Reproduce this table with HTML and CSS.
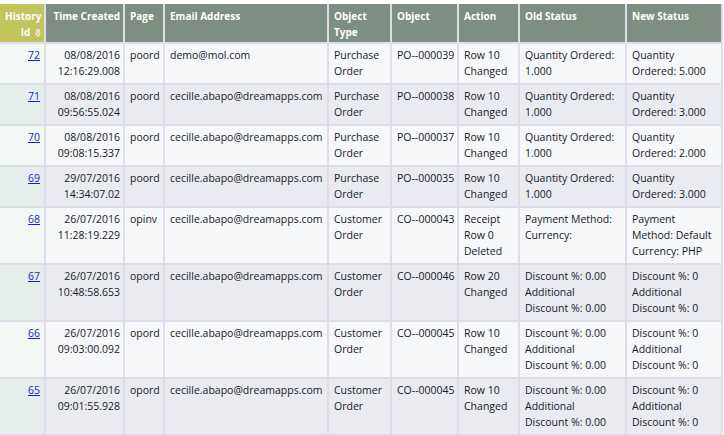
FILE: index.html
```html
<!DOCTYPE html>
<html>
<head>
<meta charset="utf-8">
<link rel="stylesheet" href="styles.css">
</head>
<body>
<table class="grid">
  <colgroup>
    <col class="c1"><col class="c2"><col class="c3"><col class="c4"><col class="c5"><col class="c6"><col class="c7"><col class="c8"><col class="c9">
  </colgroup>
  <thead>
    <tr>
      <th class="sorted num">History Id <svg class="sort" width="6" height="8" viewBox="0 0 6 8"><path d="M2 0V5M4 0V5M0.5 4.5L3 7.5L5.5 4.5" fill="none" stroke="#fff" stroke-width="1"/></svg></th>
      <th class="num">Time Created</th>
      <th>Page</th>
      <th>Email Address</th>
      <th>Object Type</th>
      <th>Object</th>
      <th>Action</th>
      <th>Old Status</th>
      <th>New Status</th>
    </tr>
  </thead>
  <tbody>
    <tr class="odd">
      <td class="id"><a href="#">72</a></td>
      <td class="num">08/08/2016 12:16:29.008</td>
      <td>poord</td>
      <td>demo@mol.com</td>
      <td>Purchase Order</td>
      <td class="code">PO--000039</td>
      <td>Row 10 Changed</td>
      <td>Quantity Ordered: 1.000</td>
      <td>Quantity Ordered: 5.000</td>
    </tr>
    <tr class="even">
      <td class="id"><a href="#">71</a></td>
      <td class="num">08/08/2016 09:56:55.024</td>
      <td>poord</td>
      <td>cecille.abapo@dreamapps.com</td>
      <td>Purchase Order</td>
      <td class="code">PO--000038</td>
      <td>Row 10 Changed</td>
      <td>Quantity Ordered: 1.000</td>
      <td>Quantity Ordered: 3.000</td>
    </tr>
    <tr class="odd">
      <td class="id"><a href="#">70</a></td>
      <td class="num">08/08/2016 09:08:15.337</td>
      <td>poord</td>
      <td>cecille.abapo@dreamapps.com</td>
      <td>Purchase Order</td>
      <td class="code">PO--000037</td>
      <td>Row 10 Changed</td>
      <td>Quantity Ordered: 1.000</td>
      <td>Quantity Ordered: 2.000</td>
    </tr>
    <tr class="even">
      <td class="id"><a href="#">69</a></td>
      <td class="num">29/07/2016 14:34:07.02</td>
      <td>poord</td>
      <td>cecille.abapo@dreamapps.com</td>
      <td>Purchase Order</td>
      <td class="code">PO--000035</td>
      <td>Row 10 Changed</td>
      <td>Quantity Ordered: 1.000</td>
      <td>Quantity Ordered: 3.000</td>
    </tr>
    <tr class="odd">
      <td class="id"><a href="#">68</a></td>
      <td class="num">26/07/2016 11:28:19.229</td>
      <td>opinv</td>
      <td>cecille.abapo@dreamapps.com</td>
      <td>Customer Order</td>
      <td class="code">CO--000043</td>
      <td>Receipt Row 0 Deleted</td>
      <td>Payment Method:<br>Currency:</td>
      <td>Payment Method: Default<br>Currency: PHP</td>
    </tr>
    <tr class="even">
      <td class="id"><a href="#">67</a></td>
      <td class="num">26/07/2016 10:48:58.653</td>
      <td>opord</td>
      <td>cecille.abapo@dreamapps.com</td>
      <td>Customer Order</td>
      <td class="code">CO--000046</td>
      <td>Row 20 Changed</td>
      <td>Discount %: 0.00<br>Additional<br>Discount %: 0.00</td>
      <td>Discount %: 0<br>Additional<br>Discount %: 0</td>
    </tr>
    <tr class="odd">
      <td class="id"><a href="#">66</a></td>
      <td class="num">26/07/2016 09:03:00.092</td>
      <td>opord</td>
      <td>cecille.abapo@dreamapps.com</td>
      <td>Customer Order</td>
      <td class="code">CO--000045</td>
      <td>Row 10 Changed</td>
      <td>Discount %: 0.00<br>Additional<br>Discount %: 0.00</td>
      <td>Discount %: 0<br>Additional<br>Discount %: 0</td>
    </tr>
    <tr class="even">
      <td class="id"><a href="#">65</a></td>
      <td class="num">26/07/2016 09:01:55.928</td>
      <td>opord</td>
      <td>cecille.abapo@dreamapps.com</td>
      <td>Customer Order</td>
      <td class="code">CO--000045</td>
      <td>Row 10 Changed</td>
      <td>Discount %: 0.00<br>Additional<br>Discount %: 0.00</td>
      <td>Discount %: 0<br>Additional<br>Discount %: 0</td>
    </tr>
  </tbody>
</table>
</body>
</html>
```
FILE: styles.css
```css
html, body {
  margin: 0;
  padding: 0;
  background: #ffffff;
}
body {
  padding-top: 4px;
  font-family: "Open Sans", "Noto Sans", sans-serif;
  font-size: 10.5px;
  line-height: 16px;
  color: #161a28;
}
.grid {
  border-collapse: separate;
  border-spacing: 0;
  table-layout: fixed;
  width: 723px;
  background: #dedde9;
}
.c1 { width: 46px; }
.c2 { width: 79px; }
.c3 { width: 40px; }
.c4 { width: 164px; }
.c5 { width: 63px; }
.c6 { width: 67px; }
.c7 { width: 61px; }
.c8 { width: 107px; }
.c9 { width: 96px; }
th, td {
  box-sizing: border-box;
  border-right: 2px solid #dedde9;
  border-bottom: 2px solid #dedde9;
  vertical-align: top;
  text-align: left;
  padding: 3px 3px 4px 5px;
}
th {
  background: #7f8e82;
  color: #ffffff;
  font-weight: 700;
  font-size: 10px;
  line-height: 16px;
  padding: 4px 3px 2px 5px;
  height: 39px;
}
th.sorted {
  background: #c2c55b;
}
.num {
  text-align: right;
}
.code {
  white-space: nowrap;
}
.sort {
  display: inline-block;
  vertical-align: -1px;
  margin-left: 2px;
}
.odd td { background: #f6f7f9; }
.even td { background: #e9ebf0; }
.odd td.id { background: #f1f8f4; }
.even td.id { background: #e5eeeb; }
td.id {
  text-align: right;
  padding-right: 4px;
}
td.id a {
  color: #1d1dc8;
  text-decoration: underline;
}
```
